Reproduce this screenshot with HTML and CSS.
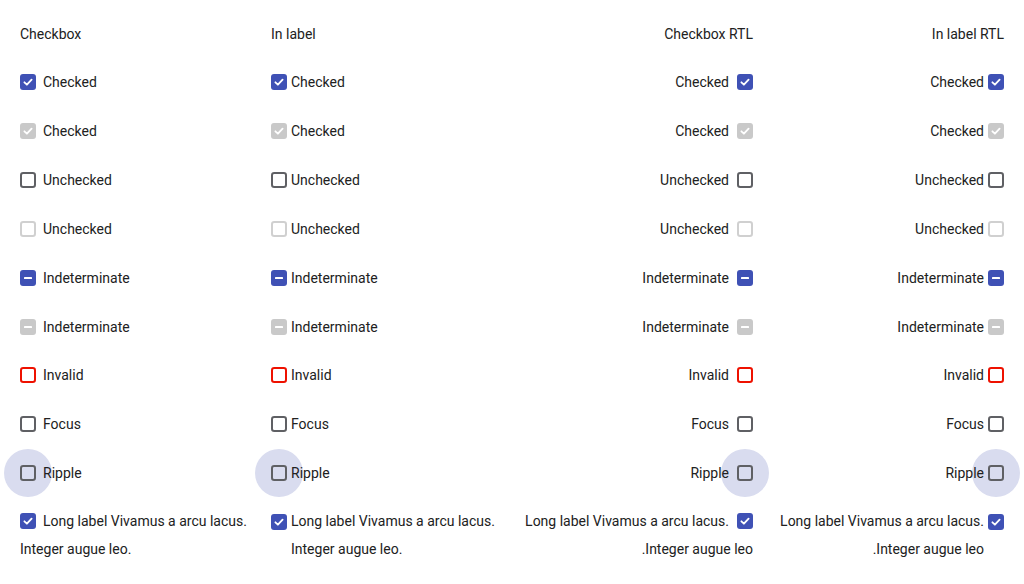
FILE: index.html
```html
<!DOCTYPE html>
<html>
<head>
<meta charset="utf-8">
<link rel="stylesheet" href="styles.css">
</head>
<body>
<svg width="0" height="0" class="defs">
  <defs>
    <symbol id="on" viewBox="0 0 16 16"><rect x="0" y="0" width="16" height="16" rx="3" fill="currentColor"/><path d="M4.4 8.3 L6.9 10.7 L11.6 5.6" fill="none" stroke="#fff" stroke-width="1.8" stroke-linecap="round" stroke-linejoin="round"/></symbol>
    <symbol id="off" viewBox="0 0 16 16"><rect x="1" y="1" width="14" height="14" rx="2.2" fill="none" stroke="currentColor" stroke-width="2"/></symbol>
    <symbol id="ind" viewBox="0 0 16 16"><rect x="0" y="0" width="16" height="16" rx="3" fill="currentColor"/><rect x="4" y="7" width="8" height="2" rx="0.6" fill="#fff"/></symbol>
  </defs>
</svg>
<div class="grid">
  <div class="col">
    <div class="title">Checkbox</div>
    <div class="row"><svg class="box primary"><use href="#on"/></svg><span class="lbl">Checked</span></div>
    <div class="row"><svg class="box disabled"><use href="#on"/></svg><span class="lbl">Checked</span></div>
    <div class="row"><svg class="box normal"><use href="#off"/></svg><span class="lbl">Unchecked</span></div>
    <div class="row"><svg class="box light"><use href="#off"/></svg><span class="lbl">Unchecked</span></div>
    <div class="row"><svg class="box primary"><use href="#ind"/></svg><span class="lbl">Indeterminate</span></div>
    <div class="row"><svg class="box disabled"><use href="#ind"/></svg><span class="lbl">Indeterminate</span></div>
    <div class="row"><svg class="box invalid"><use href="#off"/></svg><span class="lbl">Invalid</span></div>
    <div class="row"><svg class="box normal"><use href="#off"/></svg><span class="lbl">Focus</span></div>
    <div class="row"><span class="ripple"><svg class="box normal"><use href="#off"/></svg></span><span class="lbl">Ripple</span></div>
    <div class="long"><svg class="box primary inl"><use href="#on"/></svg><span class="lbl">Long label Vivamus a arcu lacus. Integer augue leo.</span></div>
  </div>
  <div class="col inlabel">
    <div class="title">In label</div>
    <label class="row"><svg class="box primary"><use href="#on"/></svg><span class="lbl">Checked</span></label>
    <label class="row"><svg class="box disabled"><use href="#on"/></svg><span class="lbl">Checked</span></label>
    <label class="row"><svg class="box normal"><use href="#off"/></svg><span class="lbl">Unchecked</span></label>
    <label class="row"><svg class="box light"><use href="#off"/></svg><span class="lbl">Unchecked</span></label>
    <label class="row"><svg class="box primary"><use href="#ind"/></svg><span class="lbl">Indeterminate</span></label>
    <label class="row"><svg class="box disabled"><use href="#ind"/></svg><span class="lbl">Indeterminate</span></label>
    <label class="row"><svg class="box invalid"><use href="#off"/></svg><span class="lbl">Invalid</span></label>
    <label class="row"><svg class="box normal"><use href="#off"/></svg><span class="lbl">Focus</span></label>
    <label class="row"><span class="ripple"><svg class="box normal"><use href="#off"/></svg></span><span class="lbl">Ripple</span></label>
    <label class="longflex"><svg class="box primary"><use href="#on"/></svg><span class="lbl">Long label Vivamus a arcu lacus. Integer augue leo.</span></label>
  </div>
  <div class="col rtl" dir="rtl">
    <div class="title">Checkbox RTL</div>
    <div class="row"><svg class="box primary"><use href="#on"/></svg><span class="lbl">Checked</span></div>
    <div class="row"><svg class="box disabled"><use href="#on"/></svg><span class="lbl">Checked</span></div>
    <div class="row"><svg class="box normal"><use href="#off"/></svg><span class="lbl">Unchecked</span></div>
    <div class="row"><svg class="box light"><use href="#off"/></svg><span class="lbl">Unchecked</span></div>
    <div class="row"><svg class="box primary"><use href="#ind"/></svg><span class="lbl">Indeterminate</span></div>
    <div class="row"><svg class="box disabled"><use href="#ind"/></svg><span class="lbl">Indeterminate</span></div>
    <div class="row"><svg class="box invalid"><use href="#off"/></svg><span class="lbl">Invalid</span></div>
    <div class="row"><svg class="box normal"><use href="#off"/></svg><span class="lbl">Focus</span></div>
    <div class="row"><span class="ripple"><svg class="box normal"><use href="#off"/></svg></span><span class="lbl">Ripple</span></div>
    <div class="long"><svg class="box primary inl"><use href="#on"/></svg><span class="lbl">Long label Vivamus a arcu lacus. Integer augue leo.</span></div>
  </div>
  <div class="col inlabel rtl" dir="rtl">
    <div class="title">In label RTL</div>
    <label class="row"><svg class="box primary"><use href="#on"/></svg><span class="lbl">Checked</span></label>
    <label class="row"><svg class="box disabled"><use href="#on"/></svg><span class="lbl">Checked</span></label>
    <label class="row"><svg class="box normal"><use href="#off"/></svg><span class="lbl">Unchecked</span></label>
    <label class="row"><svg class="box light"><use href="#off"/></svg><span class="lbl">Unchecked</span></label>
    <label class="row"><svg class="box primary"><use href="#ind"/></svg><span class="lbl">Indeterminate</span></label>
    <label class="row"><svg class="box disabled"><use href="#ind"/></svg><span class="lbl">Indeterminate</span></label>
    <label class="row"><svg class="box invalid"><use href="#off"/></svg><span class="lbl">Invalid</span></label>
    <label class="row"><svg class="box normal"><use href="#off"/></svg><span class="lbl">Focus</span></label>
    <label class="row"><span class="ripple"><svg class="box normal"><use href="#off"/></svg></span><span class="lbl">Ripple</span></label>
    <label class="longflex"><svg class="box primary"><use href="#on"/></svg><span class="lbl">Long label Vivamus a arcu lacus. Integer augue leo.</span></label>
  </div>
</div>
</body>
</html>
```
FILE: styles.css
```css
html {
  background: #fff;
}
html, body {
  margin: 0;
  padding: 0;
}
body {
  font-family: Roboto, "Liberation Sans", sans-serif;
  font-size: 14px;
  color: #212121;
}
.defs {
  position: absolute;
  width: 0;
  height: 0;
}
.grid {
  display: grid;
  grid-template-columns: repeat(4, 231px);
  column-gap: 20px;
  padding: 10px 20px 0;
}
.col {
  display: flex;
  flex-direction: column;
}
.title {
  height: 48px;
  display: flex;
  align-items: center;
}
.row {
  height: 48.85px;
  display: flex;
  align-items: center;
}
.box {
  width: 16px;
  height: 16px;
  flex: none;
  display: block;
}
.primary { color: #3f51b5; }
.disabled { color: #c9c9c9; }
.normal { color: #5f6064; }
.light { color: #d0d0d0; }
.invalid { color: #ee1100; }

.row .box, .longflex .box { margin-inline-end: 7px; }
.inlabel .row .box, .inlabel .longflex .box { margin-inline-end: 4px; }
.rtl .row .box { margin-inline-end: 8px; }
.inlabel.rtl .row .box, .inlabel.rtl .longflex .box { margin-inline-end: 4px; }

.ripple {
  position: relative;
  display: block;
  flex: none;
}
.ripple::before {
  content: "";
  position: absolute;
  inset-inline-start: -16px;
  top: -16px;
  width: 48px;
  height: 48px;
  border-radius: 50%;
  background: #d9dcef;
  z-index: -1;
}

.long {
  padding-top: 9.2px;
  line-height: 28px;
}
.long .inl {
  display: inline-block;
  vertical-align: -3px;
  margin-inline-end: 7px;
}
.rtl .long .inl { margin-inline-end: 8px; }
.longflex {
  padding-top: 9.2px;
  line-height: 28px;
  display: flex;
  align-items: flex-start;
}
.longflex .box {
  margin-top: 7px;
}
```
